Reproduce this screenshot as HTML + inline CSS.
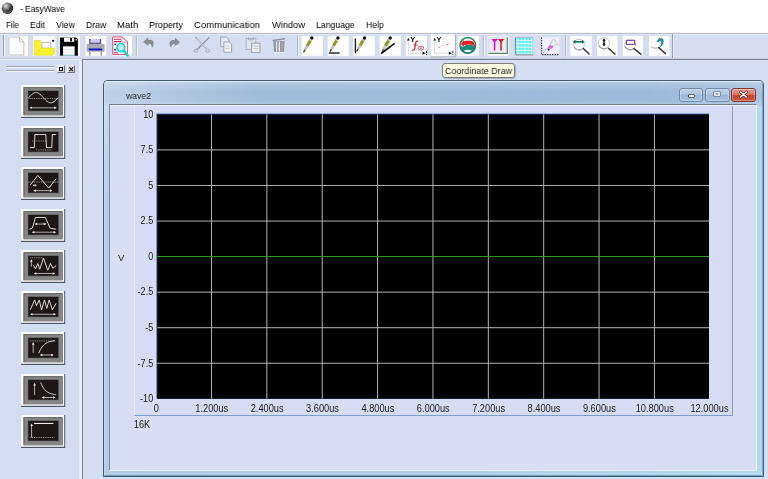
<!DOCTYPE html>
<html><head><meta charset="utf-8"><title>EasyWave</title>
<style>
html,body{margin:0;padding:0}
body{width:768px;height:479px;overflow:hidden;position:relative;background:#d5dff3;font-family:"Liberation Sans",sans-serif;font-size:9px}
.t{position:absolute;white-space:pre;transform-origin:0 0;display:block;will-change:transform}
svg{position:absolute;overflow:visible}
.ic{position:absolute;background:#fff}
</style></head><body>
<div style="position:absolute;left:0px;top:0px;width:768px;height:32px;background:#fff"></div><svg style="left:1px;top:3px" width="13" height="12" viewBox="0 0 13 12"><defs><radialGradient id="gl" cx="35%" cy="30%" r="75%"><stop offset="0" stop-color="#e8e8e8"/><stop offset="0.3" stop-color="#8e8e8e"/><stop offset="0.65" stop-color="#3a3a3a"/><stop offset="1" stop-color="#0c0c0c"/></radialGradient></defs><ellipse cx="6.4" cy="5.2" rx="5.8" ry="5.7" fill="url(#gl)"/><path d="M2.4 8.2 C4.4 10 8.4 10 10.4 7.6" stroke="#b8b8b8" stroke-width="0.8" fill="none" opacity=".7"/></svg><span class="t" style="left:20.00px;top:2.17px;font-size:9.6px;line-height:13px;color:#000;font-weight:normal;transform:scaleX(0.8723);">- EasyWave</span><span class="t" style="left:5.80px;top:18.07px;font-size:9.6px;line-height:13px;color:#000;font-weight:normal;transform:scaleX(0.8404);">File</span><span class="t" style="left:30.00px;top:18.07px;font-size:9.6px;line-height:13px;color:#000;font-weight:normal;transform:scaleX(0.9065);">Edit</span><span class="t" style="left:55.80px;top:18.07px;font-size:9.6px;line-height:13px;color:#000;font-weight:normal;transform:scaleX(0.9164);">View</span><span class="t" style="left:85.80px;top:18.07px;font-size:9.6px;line-height:13px;color:#000;font-weight:normal;transform:scaleX(0.9022);">Draw</span><span class="t" style="left:117.00px;top:18.07px;font-size:9.6px;line-height:13px;color:#000;font-weight:normal;transform:scaleX(0.9839);">Math</span><span class="t" style="left:149.20px;top:18.07px;font-size:9.6px;line-height:13px;color:#000;font-weight:normal;transform:scaleX(0.9320);">Property</span><span class="t" style="left:194.00px;top:18.07px;font-size:9.6px;line-height:13px;color:#000;font-weight:normal;transform:scaleX(0.9902);">Communication</span><span class="t" style="left:271.70px;top:18.07px;font-size:9.6px;line-height:13px;color:#000;font-weight:normal;transform:scaleX(0.9670);">Window</span><span class="t" style="left:316.00px;top:18.07px;font-size:9.6px;line-height:13px;color:#000;font-weight:normal;transform:scaleX(0.9066);">Language</span><span class="t" style="left:366.00px;top:18.07px;font-size:9.6px;line-height:13px;color:#000;font-weight:normal;transform:scaleX(0.9020);">Help</span><div style="position:absolute;left:0px;top:32px;width:768px;height:27px;background:#d5ddf1;border-bottom:1px solid #c6cde0;box-sizing:border-box"></div><div style="position:absolute;left:0px;top:32px;width:768px;height:0.7px;background:#f4f5f8"></div><div style="position:absolute;left:0px;top:32.7px;width:768px;height:1px;background:#bcc0c9"></div><div style="position:absolute;left:0px;top:33.7px;width:768px;height:1px;background:#e3e7f4"></div><div style="position:absolute;left:3px;top:35px;width:1px;height:21px;background:#9aa3b4"></div><div style="position:absolute;left:4px;top:35px;width:1px;height:21px;background:#f4f6fb"></div><div style="position:absolute;left:672px;top:33.5px;width:1px;height:24.5px;background:#9ba4b6"></div><div style="position:absolute;left:673px;top:34px;width:1px;height:24px;background:#e6eaf6"></div><svg style="left:0;top:0;filter:blur(0.3px)" width="768" height="60" viewBox="0 0 768 60"><rect x="8" y="36" width="20" height="19.8" fill="#fff"/><path d="M8.9 37.1 H19.4 L23.9 41.9 V55.1 H8.9Z" fill="#fff" stroke="#b9b9bd" stroke-width="0.9"/><path d="M19.4 37.1 V41.9 H23.9" fill="none" stroke="#b9b9bd" stroke-width="0.9"/><rect x="33" y="36" width="22.5" height="19.8" fill="#fff"/><rect x="42" y="42.3" width="8.7" height="6" fill="#fff" stroke="#a8a8a8" stroke-width="0.8"/><path d="M34.3 40.6 H40.4 L41.3 42.5 V48 H54.3 V53.6 L52.8 55.3 H34.3Z" fill="#f6f32e" stroke="#d8d43a" stroke-width="0.6"/><path d="M34.6 55 L41.3 48.2" stroke="#e2d860" stroke-width="0.9"/><circle cx="53.2" cy="40.8" r="1.15" fill="#10103a"/><rect x="59.6" y="36" width="20.4" height="19.8" fill="#fff"/><path d="M60 37.6 H76.3 L77.9 39.2 V55.7 H60Z" fill="#050505"/><rect x="64" y="37.6" width="10.2" height="4.2" fill="#fff"/><rect x="70.2" y="38" width="1.8" height="3.4" fill="#050505"/><rect x="63" y="46.3" width="11.6" height="9.4" fill="#fff"/><rect x="63" y="49" width="11.6" height="0.6" fill="#d8dce8"/><rect x="63" y="51.6" width="11.6" height="0.6" fill="#d8dce8"/><rect x="63" y="54.6" width="11.6" height="1.1" fill="#7cc8d0"/><circle cx="76.1" cy="39.7" r="0.8" fill="#fff"/><rect x="85.5" y="36" width="20.8" height="19.8" fill="#fff"/><rect x="89.6" y="39" width="11" height="5" fill="#cfcff4"/><rect x="89.2" y="39" width="1.3" height="5" fill="#5b4a80"/><rect x="99.8" y="39" width="1.3" height="5" fill="#5b4a80"/><rect x="89.2" y="42.6" width="11.9" height="1.4" fill="#6a5c98"/><rect x="86.6" y="44" width="17.9" height="7.8" rx="1" fill="#a9a9b6"/><rect x="88.8" y="48.5" width="13.4" height="1.9" fill="#1212d2"/><rect x="89.2" y="51.8" width="1.3" height="3.9" fill="#909098"/><rect x="100.6" y="51.8" width="1.3" height="3.9" fill="#909098"/><rect x="112" y="36" width="20" height="19.8" fill="#fff"/><path d="M112.7 36.9 H122 L127.6 42 V54.6 H112.7Z" fill="#fff" stroke="#d43a68" stroke-width="0.9"/><path d="M122 36.9 V42 H127.6" fill="none" stroke="#e07a98" stroke-width="0.8"/><path d="M114 39.3 H121 M114 41.6 H121 M114 52.8 H118" stroke="#d02858" stroke-width="1.1"/><path d="M114.2 44.2 H116 M114.2 49.6 H116.2" stroke="#1a1a60" stroke-width="1.1"/><circle cx="120.9" cy="47.6" r="3.9" fill="#c8f6f8" stroke="#18d6dc" stroke-width="1.8"/><path d="M123.6 50.6 L127.6 55.4" stroke="#18d6dc" stroke-width="2.6" stroke-linecap="round"/><rect x="135.9" y="35.5" width="1" height="21" fill="#aeb6c8"/><rect x="136.9" y="35.5" width="1" height="21" fill="#eef1f9"/><path d="M143 42 L148.2 37.6 L148.4 40 C152 39.2 154.2 41.6 153.6 44.4 C153.2 46.2 152.4 47.2 151.6 47.9 C152 45.6 151.2 43.6 148.4 43.8 L148.5 46Z" fill="#8b8e98"/><path d="M149.4 44.6 C150.6 45 151 46.2 150.6 47.8" stroke="#f4f6fb" stroke-width="1" fill="none"/><path d="M180.2 42.2 L175 37.8 L174.8 40.2 C171.2 39.4 169 41.8 169.6 44.6 C170 46.4 170.8 47.4 171.6 48.1 C171.2 45.8 172 43.8 174.8 44 L174.7 46.2Z" fill="#8b8e98"/><path d="M173.6 44.8 C172.4 45.2 172 46.4 172.4 48" stroke="#f4f6fb" stroke-width="1" fill="none"/><path d="M176 46.4 H180" stroke="#f4f6fb" stroke-width="0.9"/><path d="M195.6 37.2 L206.8 49.6 M209.4 37.2 L197 49.6" stroke="#959bab" stroke-width="1.5" fill="none"/><ellipse cx="196" cy="50.6" rx="1.9" ry="1.5" fill="none" stroke="#9ea4b4" stroke-width="0.9"/><ellipse cx="207.8" cy="50.8" rx="1.9" ry="1.5" fill="none" stroke="#9ea4b4" stroke-width="0.9"/><path d="M196.6 38.2 L207.6 50.6" stroke="#f0f3fa" stroke-width="0.7"/><path d="M220.6 37 H226.4 L229 39.6 V46.6 H220.6Z" fill="#e3e8f4" stroke="#9298a8" stroke-width="0.8"/><path d="M223.9 42 H229.2 L231.6 44.4 V52.3 H223.9Z" fill="#eef1f8" stroke="#8e94a4" stroke-width="0.8"/><path d="M225.4 46 H229.6 M225.4 48.4 H229.6" stroke="#b6bccb" stroke-width="0.7"/><rect x="246.2" y="38.6" width="9.6" height="11" fill="#dde3f1" stroke="#a2a8b8" stroke-width="0.8"/><path d="M248.6 37.4 V39.8 H253.4 V37.4" fill="none" stroke="#9aa0b0" stroke-width="0.8"/><rect x="251.4" y="43.2" width="8.6" height="9.2" fill="#eef1f8" stroke="#8e94a4" stroke-width="0.8"/><path d="M251.4 46.2 H260 M252.8 48.6 H258.6" stroke="#a8aebc" stroke-width="0.7"/><path d="M273.4 41 H284.6 L284 52 H274Z" fill="#9599a6"/><path d="M272.6 40.4 L285 38.8" stroke="#8e92a0" stroke-width="1.5"/><path d="M276.6 41.6 V51.4 M279.4 41.6 V51.4" stroke="#eef1f8" stroke-width="1.2"/><path d="M282 41.6 V51.4" stroke="#c2a49c" stroke-width="0.9"/><path d="M274 52.6 H284.6" stroke="#f3f5fb" stroke-width="0.8"/><rect x="297" y="35.5" width="1" height="21" fill="#aeb6c8"/><rect x="298" y="35.5" width="1" height="21" fill="#eef1f9"/><rect x="301.6" y="36" width="21.4" height="19.8" fill="#fff"/><path d="M303.80 51.80 L305.08 49.59" stroke="#4a4a1a" stroke-width="1.4" stroke-linecap="round"/><path d="M305.08 49.59 L307.16 46.00" stroke="#c0c0c6" stroke-width="2.8"/><path d="M307.16 46.00 L310.68 39.93" stroke="#8c9a24" stroke-width="3.1"/><path d="M310.20 40.76 L310.68 39.93" stroke="#d4d4c4" stroke-width="2.8"/><circle cx="311.80" cy="38.00" r="1.7" fill="#0a0a14"/><rect x="327.7" y="36" width="21.1" height="19.8" fill="#fff"/><path d="M328.8 53 H339.7" stroke="#2a2a2a" stroke-width="1.5"/><path d="M330.20 51.20 L331.43 49.09" stroke="#4a4a1a" stroke-width="1.4" stroke-linecap="round"/><path d="M331.43 49.09 L333.43 45.66" stroke="#c0c0c6" stroke-width="2.8"/><path d="M333.43 45.66 L336.82 39.85" stroke="#8c9a24" stroke-width="3.1"/><path d="M336.36 40.64 L336.82 39.85" stroke="#d4d4c4" stroke-width="2.8"/><circle cx="337.90" cy="38.00" r="1.7" fill="#0a0a14"/><rect x="353.2" y="36" width="21.5" height="19.8" fill="#fff"/><path d="M355.4 38.6 V53.3" stroke="#202020" stroke-width="1.4"/><path d="M356.90 50.80 L358.12 48.75" stroke="#4a4a1a" stroke-width="1.4" stroke-linecap="round"/><path d="M358.12 48.75 L360.09 45.42" stroke="#c0c0c6" stroke-width="2.8"/><path d="M360.09 45.42 L363.44 39.79" stroke="#8c9a24" stroke-width="3.1"/><path d="M362.98 40.56 L363.44 39.79" stroke="#d4d4c4" stroke-width="2.8"/><circle cx="364.50" cy="38.00" r="1.7" fill="#0a0a14"/><rect x="379.7" y="36" width="21.1" height="19.8" fill="#fff"/><path d="M382.30 51.40 L383.56 49.26" stroke="#4a4a1a" stroke-width="1.4" stroke-linecap="round"/><path d="M383.56 49.26 L385.62 45.77" stroke="#c0c0c6" stroke-width="2.8"/><path d="M385.62 45.77 L389.09 39.88" stroke="#8c9a24" stroke-width="3.1"/><path d="M388.62 40.68 L389.09 39.88" stroke="#d4d4c4" stroke-width="2.8"/><circle cx="390.20" cy="38.00" r="1.7" fill="#0a0a14"/><path d="M381.2 53.5 L394.6 43.4" stroke="#101010" stroke-width="1.6"/><rect x="405.9" y="36" width="21.1" height="19.8" fill="#fff"/><path d="M408.30 40.4 V53.2 H421.90" fill="none" stroke="#bdbdc4" stroke-width="0.9" stroke-dasharray="1 0.6"/><path d="M408.30 38 l-1.4 2.6 h2.8z" fill="#101010"/><path d="M425.50 53.2 l-3 -1.6 v3.2z" fill="#101010"/><rect x="426.10" y="50.8" width="0.9" height="2.4" fill="#101010"/><rect x="426.10" y="54" width="0.9" height="0.9" fill="#101010"/><text x="410.30" y="41.8" font-size="7.4" font-weight="bold" fill="#101010" font-family="Liberation Sans, sans-serif">Y</text><path d="M418.2 41.4 C415.6 40.6 415.4 43 415.2 45.4 C415 48.6 414.6 50.8 411.8 50" fill="none" stroke="#d62a3a" stroke-width="1.3"/><path d="M413.4 45 H417.8" stroke="#d62a3a" stroke-width="1"/><ellipse cx="421" cy="48.2" rx="2.9" ry="1.9" fill="none" stroke="#c23a4a" stroke-width="0.8"/><path d="M419.6 49.6 L422.4 46.8 M419.8 46.9 L422.2 49.6" stroke="#c23a4a" stroke-width="0.6"/><rect x="430.9" y="34.2" width="24.8" height="23" fill="#edf1fa"/><path d="M431.4 57.2 V34.7 H455.2" fill="none" stroke="#fbfcff" stroke-width="1"/><path d="M431 56.9 H455.4 V34.4" fill="none" stroke="#a3adbf" stroke-width="1"/><rect x="432" y="36" width="22.6" height="19.8" fill="#fff"/><path d="M434.60 40.4 V53.2 H448.20" fill="none" stroke="#bdbdc4" stroke-width="0.9" stroke-dasharray="1 0.6"/><path d="M434.60 38 l-1.4 2.6 h2.8z" fill="#101010"/><path d="M451.80 53.2 l-3 -1.6 v3.2z" fill="#101010"/><rect x="452.40" y="50.8" width="0.9" height="2.4" fill="#101010"/><rect x="452.40" y="54" width="0.9" height="0.9" fill="#101010"/><text x="436.60" y="41.8" font-size="7.4" font-weight="bold" fill="#101010" font-family="Liberation Sans, sans-serif">Y</text><path d="M438.6 47.6 L449.6 43.4" stroke="#e6a0a8" stroke-width="0.9" stroke-dasharray="1.2 1.4"/><circle cx="447.3" cy="44.6" r="0.7" fill="#d0605c"/><circle cx="439.2" cy="47.3" r="0.6" fill="#9a9aa8"/><rect x="457.9" y="36" width="21.1" height="19.8" fill="#fff"/><defs><clipPath id="cc"><circle cx="467.8" cy="45.3" r="8"/></clipPath></defs><circle cx="467.8" cy="45.3" r="8" fill="#fbeef0"/><g clip-path="url(#cc)"><path d="M458 46.4 L463.9 46.4 L465.6 45.2 L467.8 44.4 L471.5 45.2 L475 46.3 L478 46.4 V56 H458Z" fill="#1f8a78"/><path d="M460.4 44 L464 40 V41.3 C468 40.5 472 40.8 474 42.2 L475.2 46.2 L471.5 45 L467.8 44.2 L465.6 45 L464 45 V46.6Z" fill="#ea2020"/><ellipse cx="467.8" cy="53" rx="4.8" ry="3.3" fill="#eef6f8"/></g><circle cx="467.8" cy="45.3" r="7.8" fill="none" stroke="#1f8070" stroke-width="1.6"/><rect x="482.8" y="35.5" width="1" height="21" fill="#aeb6c8"/><rect x="483.8" y="35.5" width="1" height="21" fill="#eef1f9"/><rect x="487.7" y="36" width="21.1" height="19.8" fill="#fff"/><rect x="488.6" y="37.4" width="18.6" height="15.6" fill="#ecebfa"/><path d="M488.4 53.3 H507.3 V37.2" fill="none" stroke="#5f8e62" stroke-width="1.3"/><path d="M488.6 53 V37.3 H507" fill="none" stroke="#d2d8e4" stroke-width="0.8"/><path d="M491.4 39 H498 L495.4 42 V50.6 H493.8 V42Z" fill="#d21ad2"/><path d="M497.8 39 H504.4 L501.8 42 V50.6 H500.2 V42Z" fill="#de1e1e"/><rect x="515" y="37.4" width="18" height="17.6" fill="#4af2f2"/><rect x="517.60" y="38.2" width="1" height="16" fill="#e8ffff"/><rect x="515.8" y="39.80" width="17" height="1" fill="#e8ffff"/><rect x="521.00" y="38.2" width="1" height="16" fill="#e8ffff"/><rect x="515.8" y="43.20" width="17" height="1" fill="#e8ffff"/><rect x="524.40" y="38.2" width="1" height="16" fill="#e8ffff"/><rect x="515.8" y="46.60" width="17" height="1" fill="#e8ffff"/><rect x="527.80" y="38.2" width="1" height="16" fill="#e8ffff"/><rect x="515.8" y="50.00" width="17" height="1" fill="#e8ffff"/><rect x="531.20" y="38.2" width="1" height="16" fill="#e8ffff"/><rect x="515.8" y="53.40" width="17" height="1" fill="#e8ffff"/><path d="M515.4 37.4 V54.9 H533" fill="none" stroke="#8a8a90" stroke-width="1"/><path d="M515 37.6 H533" stroke="#b0b4bc" stroke-width="0.8"/><path d="M533 37.6 V55" stroke="#c6ccd6" stroke-width="0.8"/><rect x="541.2" y="37.2" width="18.2" height="17.8" fill="#f3f0fb"/><path d="M541.6 37.4 V54.6 H559.2" fill="none" stroke="#4c4c54" stroke-width="1.1" stroke-dasharray="1.6 0.9"/><path d="M543 53 C547 50 550 46 551.4 42 C552.4 39 554.4 38.6 555.6 41 C556.6 43 557.4 44.6 558.6 45.4" fill="none" stroke="#9ab8e8" stroke-width="0.9"/><path d="M544 50 L557 44" stroke="#d8b0e8" stroke-width="0.7"/><ellipse cx="550.6" cy="47" rx="2.4" ry="1.7" fill="#d860e0"/><circle cx="548.7" cy="49.6" r="1" fill="#2828b8"/><rect x="565.1" y="35.5" width="1" height="21" fill="#aeb6c8"/><rect x="566.1" y="35.5" width="1" height="21" fill="#eef1f9"/><rect x="570.3" y="36" width="21.4" height="19.8" fill="#fff"/><circle cx="579" cy="44.6" r="5.4" fill="#fff" stroke="#c4c4c8" stroke-width="1"/><path d="M574.032 46.76 A5.4 5.4 0 0 0 582.24 48.92" fill="none" stroke="#9c9ca4" stroke-width="1.1"/><path d="M583.4 48.6 L589.2 54" stroke="#3c3c40" stroke-width="1.5" stroke-linecap="round"/><path d="M574.4 41.8 H583" stroke="#127262" stroke-width="1.7"/><path d="M572.6 41.8 l2.8 -2 v4z M584.8 41.8 l-2.8 -2 v4z" fill="#127262"/><rect x="597.1" y="36" width="20.4" height="19.8" fill="#fff"/><circle cx="604" cy="43.2" r="5.6" fill="#fff" stroke="#c4c4c8" stroke-width="1"/><path d="M598.848 45.44 A5.6 5.6 0 0 0 607.36 47.68" fill="none" stroke="#9c9ca4" stroke-width="1.1"/><path d="M608.4 48.4 L615 54" stroke="#3c3c40" stroke-width="1.5" stroke-linecap="round"/><path d="M604 40 V45" stroke="#141414" stroke-width="1.5"/><path d="M604 38.3 l-1.7 2.4 h3.4z M604 46.6 l-1.7 -2.4 h3.4z" fill="#141414"/><rect x="622.8" y="36" width="20.3" height="19.8" fill="#fff"/><circle cx="630.2" cy="44.4" r="5.4" fill="#fff" stroke="#c4c4c8" stroke-width="1"/><path d="M625.232 46.56 A5.4 5.4 0 0 0 633.44 48.72" fill="none" stroke="#9c9ca4" stroke-width="1.1"/><path d="M634 48.6 L640.8 54.2" stroke="#3c3c40" stroke-width="1.5" stroke-linecap="round"/><rect x="626.4" y="40.4" width="8.3" height="4" fill="#fdf6ff" stroke="#6c3c9c" stroke-width="1"/><rect x="649" y="36" width="20.4" height="19.8" fill="#fff"/><path d="M651 46.6 C652.4 48.4 656.4 48.6 659 47.4" fill="none" stroke="#a4a4ac" stroke-width="1"/><path d="M658.8 47.6 L665.4 53.6" stroke="#3c3c40" stroke-width="1.5" stroke-linecap="round"/><path d="M656.4 41.4 L659.8 37.2 L660.2 38.6 C663.2 37.4 664.4 40 663.4 43.4 C662.8 45.2 661.4 46.6 659.8 47.2 C661.6 44.6 661.8 41.6 660 40.8 L659.6 42.6Z" fill="#2c8c9e"/><path d="M659 41.6 C660.6 42 661 44 659.4 46.2" fill="none" stroke="#b8ecf2" stroke-width="1.2"/></svg><div style="position:absolute;left:0px;top:59px;width:79px;height:420px;background:#d3ddf2"></div><div style="position:absolute;left:79px;top:59px;width:3px;height:420px;background:#e7ebf9"></div><div style="position:absolute;left:0px;top:59px;width:82px;height:1.4px;background:#eceff9"></div><svg style="left:20.6px;top:85.2px;filter:blur(0.3px)" width="44.2" height="33" viewBox="0 0 44.2 33"><rect x="0" y="0" width="44.2" height="33" fill="#4e5560"/><rect x="0" y="0" width="43.2" height="31.8" fill="#fbfcfe"/><rect x="2.4" y="2.2" width="39.2" height="28" fill="#4a4a4a"/><rect x="3.3" y="3.1" width="38.3" height="27.1" fill="#868686"/><rect x="6.6" y="5.2" width="31.6" height="21.2" fill="#6a6a6a"/><rect x="7.3" y="5.9" width="30" height="19.8" fill="#1d1616"/><polyline points="7.67,12.68 8.41,11.87 9.14,11.08 9.88,10.33 10.61,9.64 11.35,9.02 12.08,8.50 12.82,8.07 13.55,7.76 14.28,7.58 15.02,7.51 15.75,7.58 16.49,7.76 17.22,8.07 17.96,8.50 18.69,9.02 19.43,9.64 20.16,10.33 20.90,11.08 21.63,11.87 22.37,12.68 23.10,13.48 23.84,14.27 24.57,15.02 25.31,15.71 26.04,16.33 26.78,16.85 27.51,17.28 28.25,17.59 28.98,17.78 29.71,17.84 30.45,17.78 31.18,17.59 31.92,17.28 32.65,16.85 33.39,16.33 34.12,15.71 34.86,15.02 35.59,14.27 36.33,13.48 37.06,12.68" fill="none" stroke="#ececec" stroke-width="0.9" stroke-linejoin="round"/><path d="M7.67 13.43 H37.06" stroke="#cfcfcf" stroke-width="0.8" stroke-dasharray="0.9 0.9"/><path d="M9.42 22.82 H34.84" stroke="#d8d8d8" stroke-width="0.8"/><path d="M8.42 22.82 l2.60 -1.3 v2.6z M35.84 22.82 l-2.60 -1.3 v2.6z" fill="#e8e8e8"/></svg><svg style="left:20.6px;top:126.1px;filter:blur(0.3px)" width="44.2" height="33" viewBox="0 0 44.2 33"><rect x="0" y="0" width="44.2" height="33" fill="#4e5560"/><rect x="0" y="0" width="43.2" height="31.8" fill="#fbfcfe"/><rect x="2.4" y="2.2" width="39.2" height="28" fill="#4a4a4a"/><rect x="3.3" y="3.1" width="38.3" height="27.1" fill="#868686"/><rect x="6.6" y="5.2" width="31.6" height="21.2" fill="#6a6a6a"/><rect x="7.3" y="5.9" width="30" height="19.8" fill="#1d1616"/><polyline points="8.89,21.60 13.31,21.60 13.87,8.45 24.86,8.45 25.42,21.60 30.77,21.60 31.33,8.45 35.18,8.45" fill="none" stroke="#ececec" stroke-width="0.9" stroke-linejoin="round"/><path d="M11.24 15.02 H26.26" stroke="#cfcfcf" stroke-width="0.8" stroke-dasharray="0.9 0.9"/><path d="M15.00 23.94 H30.96" stroke="#cfcfcf" stroke-width="0.8" stroke-dasharray="0.9 0.9"/></svg><svg style="left:20.6px;top:167.2px;filter:blur(0.3px)" width="44.2" height="33" viewBox="0 0 44.2 33"><rect x="0" y="0" width="44.2" height="33" fill="#4e5560"/><rect x="0" y="0" width="43.2" height="31.8" fill="#fbfcfe"/><rect x="2.4" y="2.2" width="39.2" height="28" fill="#4a4a4a"/><rect x="3.3" y="3.1" width="38.3" height="27.1" fill="#868686"/><rect x="6.6" y="5.2" width="31.6" height="21.2" fill="#6a6a6a"/><rect x="7.3" y="5.9" width="30" height="19.8" fill="#1d1616"/><polyline points="9.36,17.84 16.87,8.45 27.67,21.13 35.18,11.74" fill="none" stroke="#ececec" stroke-width="0.9" stroke-linejoin="round"/><path d="M7.48 15.02 H37.06" stroke="#cfcfcf" stroke-width="0.8" stroke-dasharray="0.9 0.9"/><path d="M12.71 18.31 H14.94" stroke="#d8d8d8" stroke-width="0.8"/><path d="M11.71 18.31 l1.60 -1.3 v2.6z M15.94 18.31 l-1.60 -1.3 v2.6z" fill="#e8e8e8"/><path d="M13.18 23.66 H30.43" stroke="#d8d8d8" stroke-width="0.8"/><path d="M12.18 23.66 l2.60 -1.3 v2.6z M31.43 23.66 l-2.60 -1.3 v2.6z" fill="#e8e8e8"/></svg><svg style="left:20.6px;top:208.7px;filter:blur(0.3px)" width="44.2" height="33" viewBox="0 0 44.2 33"><rect x="0" y="0" width="44.2" height="33" fill="#4e5560"/><rect x="0" y="0" width="43.2" height="31.8" fill="#fbfcfe"/><rect x="2.4" y="2.2" width="39.2" height="28" fill="#4a4a4a"/><rect x="3.3" y="3.1" width="38.3" height="27.1" fill="#868686"/><rect x="6.6" y="5.2" width="31.6" height="21.2" fill="#6a6a6a"/><rect x="7.3" y="5.9" width="30" height="19.8" fill="#1d1616"/><polyline points="8.42,20.19 11.43,18.97 14.53,8.45 24.39,8.45 29.08,19.25 35.18,20.19" fill="none" stroke="#ececec" stroke-width="0.9" stroke-linejoin="round"/><path d="M14.59 15.02 H24.32" stroke="#d8d8d8" stroke-width="0.8"/><path d="M13.59 15.02 l2.60 -1.3 v2.6z M25.32 15.02 l-2.60 -1.3 v2.6z" fill="#e8e8e8"/><path d="M11.77 23.19 H34.18" stroke="#d8d8d8" stroke-width="0.8"/><path d="M10.77 23.19 l2.60 -1.3 v2.6z M35.18 23.19 l-2.60 -1.3 v2.6z" fill="#e8e8e8"/></svg><svg style="left:20.6px;top:249.7px;filter:blur(0.3px)" width="44.2" height="33" viewBox="0 0 44.2 33"><rect x="0" y="0" width="44.2" height="33" fill="#4e5560"/><rect x="0" y="0" width="43.2" height="31.8" fill="#fbfcfe"/><rect x="2.4" y="2.2" width="39.2" height="28" fill="#4a4a4a"/><rect x="3.3" y="3.1" width="38.3" height="27.1" fill="#868686"/><rect x="6.6" y="5.2" width="31.6" height="21.2" fill="#6a6a6a"/><rect x="7.3" y="5.9" width="30" height="19.8" fill="#1d1616"/><polyline points="12.65,15.49 14.53,18.78 16.87,13.62 18.75,19.25 22.51,7.98 26.73,20.19 29.55,13.62 31.90,18.31 35.18,15.49" fill="none" stroke="#ececec" stroke-width="0.9" stroke-linejoin="round"/><path d="M9.36 7.79 H21.57" stroke="#cfcfcf" stroke-width="0.8" stroke-dasharray="0.9 0.9"/><path d="M10.30 10.20 V16.71" stroke="#d8d8d8" stroke-width="0.8"/><path d="M10.30 9.20 l-1.3 2.6 h2.6z" fill="#e8e8e8"/><path d="M13.65 23.47 H33.25" stroke="#d8d8d8" stroke-width="0.8"/><path d="M12.65 23.47 l2.60 -1.3 v2.6z M34.25 23.47 l-2.60 -1.3 v2.6z" fill="#e8e8e8"/></svg><svg style="left:20.6px;top:291.2px;filter:blur(0.3px)" width="44.2" height="33" viewBox="0 0 44.2 33"><rect x="0" y="0" width="44.2" height="33" fill="#4e5560"/><rect x="0" y="0" width="43.2" height="31.8" fill="#fbfcfe"/><rect x="2.4" y="2.2" width="39.2" height="28" fill="#4a4a4a"/><rect x="3.3" y="3.1" width="38.3" height="27.1" fill="#868686"/><rect x="6.6" y="5.2" width="31.6" height="21.2" fill="#6a6a6a"/><rect x="7.3" y="5.9" width="30" height="19.8" fill="#1d1616"/><polyline points="9.36,18.78 13.59,8.92 15.47,14.55 18.28,8.92 20.63,18.78 23.45,8.92 25.79,17.37 28.14,8.92 31.43,18.78 35.18,12.21" fill="none" stroke="#ececec" stroke-width="0.9" stroke-linejoin="round"/><path d="M9.89 23.29 H34.18" stroke="#d8d8d8" stroke-width="0.8"/><path d="M8.89 23.29 l2.60 -1.3 v2.6z M35.18 23.29 l-2.60 -1.3 v2.6z" fill="#e8e8e8"/></svg><svg style="left:20.6px;top:332.2px;filter:blur(0.3px)" width="44.2" height="33" viewBox="0 0 44.2 33"><rect x="0" y="0" width="44.2" height="33" fill="#4e5560"/><rect x="0" y="0" width="43.2" height="31.8" fill="#fbfcfe"/><rect x="2.4" y="2.2" width="39.2" height="28" fill="#4a4a4a"/><rect x="3.3" y="3.1" width="38.3" height="27.1" fill="#868686"/><rect x="6.6" y="5.2" width="31.6" height="21.2" fill="#6a6a6a"/><rect x="7.3" y="5.9" width="30" height="19.8" fill="#1d1616"/><polyline points="17.81,21.13 18.61,19.22 19.41,17.59 20.21,16.20 21.01,15.02 21.80,14.01 22.60,13.15 23.40,12.42 24.20,11.80 25.00,11.27 25.79,10.81 26.59,10.43 27.39,10.10 28.19,9.82 28.99,9.58 29.78,9.38 30.58,9.20 31.38,9.06 32.18,8.93 32.98,8.82 33.78,8.73" fill="none" stroke="#ececec" stroke-width="0.9" stroke-linejoin="round"/><path d="M8.89 8.92 H33.78" stroke="#cfcfcf" stroke-width="0.8" stroke-dasharray="0.9 0.9"/><path d="M12.18 11.05 V20.94" stroke="#d8d8d8" stroke-width="0.8"/><path d="M12.18 10.05 l-1.3 2.6 h2.6z" fill="#e8e8e8"/><path d="M19.75 23.00 H31.84" stroke="#d8d8d8" stroke-width="0.8"/><path d="M18.75 23.00 l2.60 -1.3 v2.6z M32.84 23.00 l-2.60 -1.3 v2.6z" fill="#e8e8e8"/></svg><svg style="left:20.6px;top:373.8px;filter:blur(0.3px)" width="44.2" height="33" viewBox="0 0 44.2 33"><rect x="0" y="0" width="44.2" height="33" fill="#4e5560"/><rect x="0" y="0" width="43.2" height="31.8" fill="#fbfcfe"/><rect x="2.4" y="2.2" width="39.2" height="28" fill="#4a4a4a"/><rect x="3.3" y="3.1" width="38.3" height="27.1" fill="#868686"/><rect x="6.6" y="5.2" width="31.6" height="21.2" fill="#6a6a6a"/><rect x="7.3" y="5.9" width="30" height="19.8" fill="#1d1616"/><polyline points="19.69,8.45 20.47,10.33 21.24,11.94 22.02,13.30 22.79,14.47 23.56,15.46 24.34,16.30 25.11,17.02 25.89,17.64 26.66,18.16 27.44,18.61 28.21,18.99 28.99,19.31 29.76,19.59 30.54,19.82 31.31,20.02 32.09,20.19 32.86,20.34 33.63,20.46 34.41,20.57 35.18,20.66" fill="none" stroke="#ececec" stroke-width="0.9" stroke-linejoin="round"/><path d="M13.59 9.92 V20.94" stroke="#d8d8d8" stroke-width="0.8"/><path d="M13.59 8.92 l-1.3 2.6 h2.6z" fill="#e8e8e8"/><path d="M21.63 23.47 H33.71" stroke="#d8d8d8" stroke-width="0.8"/><path d="M20.63 23.47 l2.60 -1.3 v2.6z M34.71 23.47 l-2.60 -1.3 v2.6z" fill="#e8e8e8"/></svg><svg style="left:20.6px;top:415.1px;filter:blur(0.3px)" width="44.2" height="33" viewBox="0 0 44.2 33"><rect x="0" y="0" width="44.2" height="33" fill="#4e5560"/><rect x="0" y="0" width="43.2" height="31.8" fill="#fbfcfe"/><rect x="2.4" y="2.2" width="39.2" height="28" fill="#4a4a4a"/><rect x="3.3" y="3.1" width="38.3" height="27.1" fill="#868686"/><rect x="6.6" y="5.2" width="31.6" height="21.2" fill="#6a6a6a"/><rect x="7.3" y="5.9" width="30" height="19.8" fill="#1d1616"/><polyline points="13.12,8.45 32.37,8.45" fill="none" stroke="#ececec" stroke-width="1.1" stroke-linejoin="round"/><path d="M10.58 9.45 V22.35" stroke="#d8d8d8" stroke-width="0.8"/><path d="M10.58 8.45 l-1.3 2.6 h2.6z" fill="#e8e8e8"/><path d="M9.36 22.54 H33.31" stroke="#cfcfcf" stroke-width="0.8" stroke-dasharray="0.9 0.9"/></svg><div style="position:absolute;left:6px;top:66px;width:48px;height:1px;background:#9aa3b5"></div><div style="position:absolute;left:6px;top:67px;width:48px;height:1px;background:#f7f9fd"></div><div style="position:absolute;left:6px;top:70px;width:48px;height:1px;background:#9aa3b5"></div><div style="position:absolute;left:6px;top:71px;width:48px;height:1px;background:#f7f9fd"></div><div style="position:absolute;left:57.3px;top:64.5px;width:8px;height:8px;box-sizing:border-box;background:#d3d8e2;border:1px solid #f4f6fa;border-right-color:#6d737e;border-bottom-color:#6d737e"><div style="position:absolute;left:1px;top:1px;width:4px;height:4px;box-sizing:border-box;border:1px solid #111;border-top-width:1.6px"></div></div><div style="position:absolute;left:67.4px;top:64.5px;width:8px;height:8px;box-sizing:border-box;background:#d3d8e2;border:1px solid #f4f6fa;border-right-color:#6d737e;border-bottom-color:#6d737e"><svg style="left:1px;top:1px" width="4.5" height="4.5" viewBox="0 0 4.5 4.5"><path d="M0.4 0.4L4.1 4.1M4.1 0.4L0.4 4.1" stroke="#111" stroke-width="1.1"/></svg></div><div style="position:absolute;left:81.5px;top:59.2px;width:686.5px;height:420px;background:#d5dff3;border-left:1.7px solid #76818f;border-top:1.2px solid #76828f;box-sizing:border-box"></div><div style="position:absolute;left:103px;top:80px;width:661px;height:397px;box-sizing:border-box;border:1.2px solid #3d5b76;border-right:1.9px solid #3f6282;border-bottom:1.7px solid #3a5f7e;border-radius:5px 5px 1px 1px;background:linear-gradient(to right,#b5cbe6 0,#b6cce7 40%,#b5daee 100%)"><div style="position:absolute;left:0;top:0;right:0;height:25px;border-radius:4px 4px 0 0;background:linear-gradient(to right,rgba(255,255,255,.34) 0,rgba(255,255,255,.05) 150px,rgba(255,255,255,0) 540px,rgba(255,255,255,.12) 100%),linear-gradient(to bottom,#c2d5ec 0,#abc3e0 3px,#9cb7d9 12px,#a0bbdb 20px,#aec6e2 24px,#b5cbe6 25px)"></div><div style="position:absolute;left:0;top:25px;width:7px;height:110px;background:linear-gradient(to bottom,rgba(255,255,255,.3),rgba(255,255,255,0))"></div><div style="position:absolute;left:0;top:0;right:0;bottom:0;border:1px solid rgba(255,255,255,.45);border-right-color:rgba(80,125,160,.5);border-bottom-color:rgba(70,115,150,.6);border-left-color:rgba(255,255,255,.2);border-radius:4px 4px 0 0"></div></div><span class="t" style="left:126.00px;top:89.24px;font-size:9.4px;line-height:13px;color:#101c30;font-weight:normal;transform:scaleX(0.9222);text-shadow:0 0 3px rgba(255,255,255,.7);">wave2</span><div style="position:absolute;left:679px;top:88px;width:24px;height:14px;box-sizing:border-box;border:1px solid #6f88a8;border-radius:3px;background:linear-gradient(to bottom,#bdd0e8 0,#aec5e1 45%,#9ab5d6 52%,#a9c2df 100%);box-shadow:inset 0 0 0 1px rgba(255,255,255,.28)"><div style="position:absolute;left:7.6px;top:5.4px;width:5.6px;height:1.2px;background:#f8fafc;border:1px solid #566a84;border-radius:1px"></div></div><div style="position:absolute;left:705px;top:88px;width:25px;height:14px;box-sizing:border-box;border:1px solid #6f88a8;border-radius:3px;background:linear-gradient(to bottom,#bdd0e8 0,#aec5e1 45%,#9ab5d6 52%,#a9c2df 100%);box-shadow:inset 0 0 0 1px rgba(255,255,255,.28)"><svg style="left:7.2px;top:2.4px" width="8" height="6" viewBox="0 0 8 6"><rect x="0.4" y="0.4" width="7.2" height="5.2" rx="1" fill="#566a84"/><rect x="1.1" y="1.1" width="5.8" height="3.8" rx="0.6" fill="#f6f8fb"/><rect x="2.5" y="2.4" width="3" height="1.3" fill="#6f88aa"/></svg></div><div style="position:absolute;left:731px;top:88px;width:25px;height:14px;box-sizing:border-box;border:1px solid #85372c;border-radius:3px;background:linear-gradient(to bottom,#e3a195 0,#d67a68 45%,#c4432e 52%,#cf5a43 100%);box-shadow:inset 0 0 0 1px rgba(255,255,255,.28)"><svg style="left:7.2px;top:2.2px" width="9" height="7" viewBox="0 0 9 7"><path d="M1.6 1 L7.4 6 M7.4 1 L1.6 6" stroke="#6a241a" stroke-width="2.9" stroke-linecap="round"/><path d="M1.6 1 L7.4 6 M7.4 1 L1.6 6" stroke="#fff" stroke-width="1.6" stroke-linecap="round"/></svg></div><div style="position:absolute;left:109.2px;top:104px;width:648.3px;height:366.5px;box-sizing:border-box;background:#d6dff3;border:1px solid #6f7e94;border-left:1.4px solid #7a899f;border-right:1.5px solid #f0f4fb;border-bottom:1.5px solid #e9f0f9"><div style="position:absolute;left:0;top:0;right:0;bottom:0;border-top:1.6px solid #eef2fa"></div></div><div style="position:absolute;left:133.5px;top:106px;width:599.5px;height:310px;box-sizing:border-box;background:#d4ddf3;border-left:1.5px solid #e3e9f8;border-right:1px solid #8d9cb8;border-bottom:1px solid #7f9dd0"></div><svg style="left:0;top:0" width="768" height="479" viewBox="0 0 768 479" font-family="Liberation Sans, sans-serif" font-size="10.3" fill="#1c1c1c"><rect x="156.2" y="113.4" width="552.8" height="285.4" fill="#5f83c4"/><rect x="157.2" y="114.3" width="551.8" height="284.5" fill="#000"/><rect x="210.97" y="114.3" width="1" height="284.5" fill="#b2b2b2"/><rect x="266.34" y="114.3" width="1" height="284.5" fill="#b2b2b2"/><rect x="321.71" y="114.3" width="1" height="284.5" fill="#b2b2b2"/><rect x="377.08" y="114.3" width="1" height="284.5" fill="#b2b2b2"/><rect x="432.45" y="114.3" width="1" height="284.5" fill="#b2b2b2"/><rect x="487.82" y="114.3" width="1" height="284.5" fill="#b2b2b2"/><rect x="543.19" y="114.3" width="1" height="284.5" fill="#b2b2b2"/><rect x="598.56" y="114.3" width="1" height="284.5" fill="#b2b2b2"/><rect x="653.93" y="114.3" width="1" height="284.5" fill="#b2b2b2"/><rect x="157.2" y="149.40" width="551.8" height="1" fill="#b2b2b2"/><rect x="157.2" y="184.96" width="551.8" height="1" fill="#b2b2b2"/><rect x="157.2" y="220.52" width="551.8" height="1" fill="#b2b2b2"/><rect x="157.2" y="256.08" width="551.8" height="1" fill="#3f9e2e"/><rect x="157.2" y="291.64" width="551.8" height="1" fill="#b2b2b2"/><rect x="157.2" y="327.20" width="551.8" height="1" fill="#b2b2b2"/><rect x="157.2" y="362.76" width="551.8" height="1" fill="#b2b2b2"/><text transform="translate(153.2 117.64) scale(0.88 1)" text-anchor="end">10</text><text transform="translate(153.2 153.20) scale(0.88 1)" text-anchor="end">7.5</text><text transform="translate(153.2 188.76) scale(0.88 1)" text-anchor="end">5</text><text transform="translate(153.2 224.32) scale(0.88 1)" text-anchor="end">2.5</text><text transform="translate(153.2 259.88) scale(0.88 1)" text-anchor="end">0</text><text transform="translate(153.2 295.44) scale(0.88 1)" text-anchor="end">-2.5</text><text transform="translate(153.2 331.00) scale(0.88 1)" text-anchor="end">-5</text><text transform="translate(153.2 366.56) scale(0.88 1)" text-anchor="end">-7.5</text><text transform="translate(153.2 402.12) scale(0.88 1)" text-anchor="end">-10</text><text transform="translate(156.40 411.7) scale(0.9 1)" text-anchor="middle">0</text><text transform="translate(211.77 411.7) scale(0.9 1)" text-anchor="middle">1.200us</text><text transform="translate(267.14 411.7) scale(0.9 1)" text-anchor="middle">2.400us</text><text transform="translate(322.51 411.7) scale(0.9 1)" text-anchor="middle">3.600us</text><text transform="translate(377.88 411.7) scale(0.9 1)" text-anchor="middle">4.800us</text><text transform="translate(433.25 411.7) scale(0.9 1)" text-anchor="middle">6.000us</text><text transform="translate(488.62 411.7) scale(0.9 1)" text-anchor="middle">7.200us</text><text transform="translate(543.99 411.7) scale(0.9 1)" text-anchor="middle">8.400us</text><text transform="translate(599.36 411.7) scale(0.9 1)" text-anchor="middle">9.600us</text><text transform="translate(654.73 411.7) scale(0.9 1)" text-anchor="middle">10.800us</text><text transform="translate(709.50 411.7) scale(0.9 1)" text-anchor="middle">12.000us</text><text x="118" y="261.2" font-size="9.6">V</text><text transform="translate(133.8 427.9) scale(0.9 1)">16K</text></svg><div style="position:absolute;left:442px;top:63px;width:73px;height:15px;box-sizing:border-box;background:#ffffe6;border:1px solid #7c7c7c;border-radius:3px;box-shadow:1px 1px 1px rgba(80,90,110,.35)"></div><span class="t" style="left:445.20px;top:64.27px;font-size:9.6px;line-height:13px;color:#1a1a1a;font-weight:normal;transform:scaleX(0.9333);">Coordinate Draw</span></body></html>
